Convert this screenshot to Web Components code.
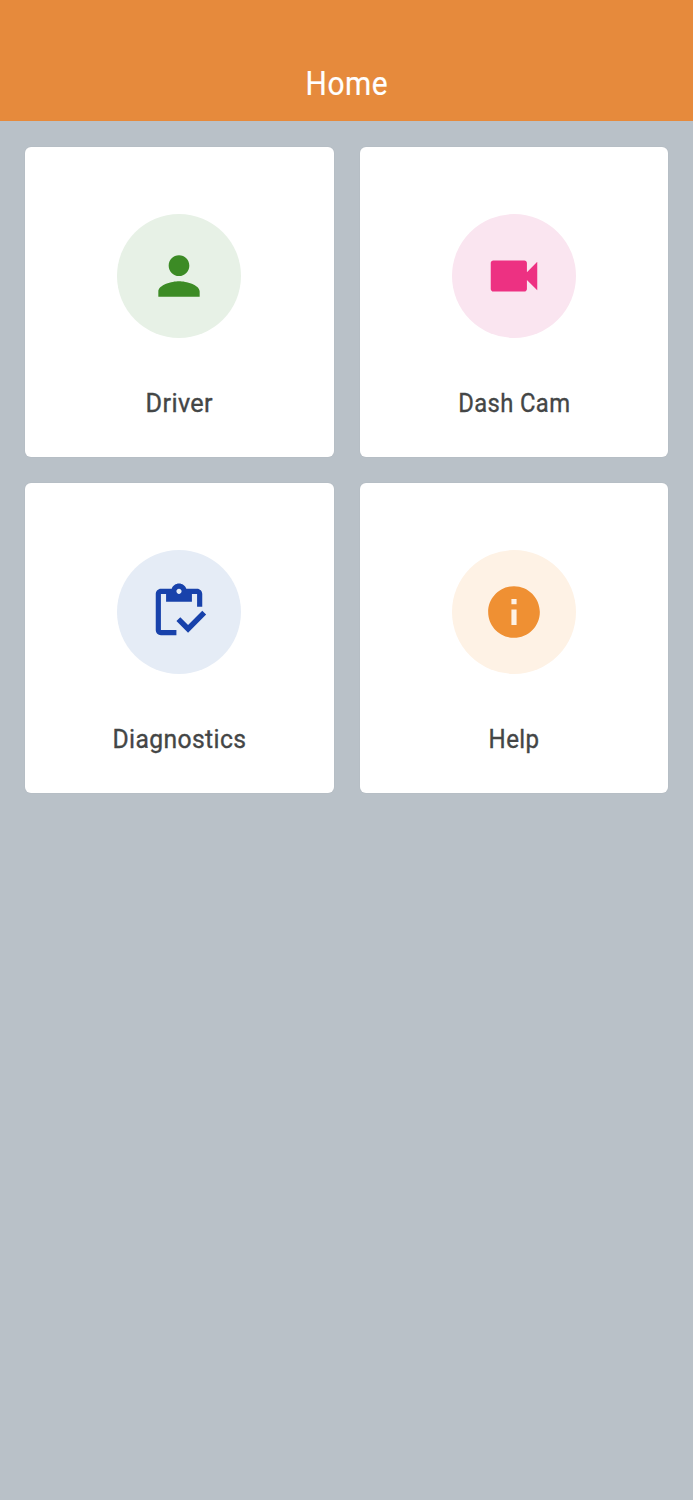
<!DOCTYPE html>
<html lang="en">
<head>
<meta charset="utf-8">
<title>Home</title>
<style>
  html, body {
    margin: 0;
    min-height: 100%;
  }
  body {
    background: #b9c1c8;
    font-family: Roboto, "Liberation Sans", sans-serif;
  }
</style>
</head>
<body>

<template id="app-header">
  <style>
    :host {
      display: flex;
      justify-content: center;
      align-items: flex-end;
      box-sizing: border-box;
      height: 121px;
      padding-bottom: 18px;
      background: #e68a3c;
      color: #fff;
    }
    h1 {
      margin: 0;
      font-size: 32.5px;
      font-weight: 400;
      line-height: 38px;
      letter-spacing: 0.6px;
      transform: scaleX(.92);
      -webkit-text-stroke: 0.2px;
    }
  </style>
  <h1><slot></slot></h1>
</template>

<template id="menu-grid">
  <style>
    :host {
      display: grid;
      grid-template-columns: 1fr 1fr;
      grid-auto-rows: 310px;
      gap: 26px;
      padding: 26px 24.6px;
    }
  </style>
  <slot></slot>
</template>

<template id="menu-card">
  <style>
    :host {
      display: flex;
      flex-direction: column;
      align-items: center;
      box-sizing: border-box;
      padding-top: 67px;
      border-radius: 6px;
      background: #fff;
      box-shadow: 0 0 2px rgba(0, 0, 0, .05);
    }
    .circle {
      display: flex;
      justify-content: center;
      align-items: center;
      width: 124px;
      height: 124px;
      border-radius: 50%;
      background: var(--tint);
    }
    svg {
      width: 62px;
      height: 62px;
      fill: var(--tone);
    }
    .label {
      margin-top: 50px;
      font-size: 25.6px;
      line-height: 31px;
      letter-spacing: 0.4px;
      white-space: nowrap;
      color: #444646;
      transform: scaleX(var(--stretch, 1));
      -webkit-text-stroke: 0.35px;
    }
  </style>
  <div class="circle">
    <svg viewBox="0 0 24 24"><path fill-rule="evenodd"/></svg>
  </div>
  <div class="label"><slot></slot></div>
</template>

<app-header>Home</app-header>
<menu-grid>
  <menu-card icon="person" style="--tone: #3c8b25; --tint: #e7f1e6; --stretch: .985">Driver</menu-card>
  <menu-card icon="camera" style="--tone: #ed3182; --tint: #fae5f0; --stretch: .93">Dash Cam</menu-card>
  <menu-card icon="checklist" style="--tone: #1842ab; --tint: #e5ecf6; --stretch: .965">Diagnostics</menu-card>
  <menu-card icon="info" style="--tone: #ef9033; --tint: #fef2e5; --stretch: .94">Help</menu-card>
</menu-grid>

<script>
  const icons = {
    person: 'M12 12c2.21 0 4-1.79 4-4s-1.79-4-4-4-4 1.79-4 4 1.79 4 4 4zm0 2c-2.67 0-8 1.34-8 4v2h16v-2c0-2.66-5.33-4-8-4z',
    camera: 'M17 10.5V7c0-.55-.45-1-1-1H4c-.55 0-1 .45-1 1v10c0 .55.45 1 1 1h12c.55 0 1-.45 1-1v-3.5l4 4v-11l-4 4z',
    checklist: 'M5 5h2v3h10V5h2v5h2V5c0-1.1-.9-2-2-2h-4.18C14.4 1.84 13.3 1 12 1s-2.4.84-2.82 2H5c-1.1 0-2 .9-2 2v14c0 1.1.9 2 2 2h6v-2H5V5zm7-2c.55 0 1 .45 1 1s-.45 1-1 1-1-.45-1-1 .45-1 1-1zM21 11.5 15.51 17l-3.01-3-1.5 1.5 4.51 4.5 6.99-7z',
    info: 'M12 2C6.48 2 2 6.48 2 12s4.48 10 10 10 10-4.48 10-10S17.52 2 12 2zm1 15h-2v-6h2v6zm0-8h-2V7h2v2z'
  };

  function attachTemplate(element, id) {
    const content = document.getElementById(id).content;
    element.attachShadow({mode: 'open'}).appendChild(document.importNode(content, true));
  }

  class AppHeader extends HTMLElement {
    constructor() {
      super();
      attachTemplate(this, 'app-header');
    }
  }

  class MenuGrid extends HTMLElement {
    constructor() {
      super();
      attachTemplate(this, 'menu-grid');
    }
  }

  class MenuCard extends HTMLElement {
    constructor() {
      super();
      attachTemplate(this, 'menu-card');
    }

    connectedCallback() {
      const path = this.shadowRoot.querySelector('path');
      path.setAttribute('d', icons[this.getAttribute('icon')]);
    }
  }

  customElements.define('app-header', AppHeader);
  customElements.define('menu-grid', MenuGrid);
  customElements.define('menu-card', MenuCard);
</script>
</body>
</html>
